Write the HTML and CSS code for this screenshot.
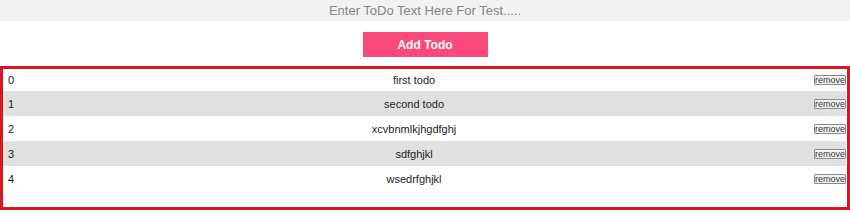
FILE: index.html
```html
<!DOCTYPE html>
<html lang="en">
<head>
  <meta charset="UTF-8" />
  <title>Todo List</title>
  <meta name="viewport" content="width=device-width, initial-scale=1.0"/>
  <link rel="stylesheet" href="styles.css">
</head>
<body>
  <input id="todoInput" class="todo-input" type="text" placeholder="Enter ToDo Text Here For Test....."/>
  <div class="add-wrap">
    <button class="add-button">Add Todo</button>
  </div>
  <ul class="todo-list" id="todoList">
    <li class="todo-row"><span class="todo-index">0</span><span class="todo-text">first todo</span><button class="remove-button">remove</button></li>
    <li class="todo-row"><span class="todo-index">1</span><span class="todo-text">second todo</span><button class="remove-button">remove</button></li>
    <li class="todo-row"><span class="todo-index">2</span><span class="todo-text">xcvbnmlkjhgdfghj</span><button class="remove-button">remove</button></li>
    <li class="todo-row"><span class="todo-index">3</span><span class="todo-text">sdfghjkl</span><button class="remove-button">remove</button></li>
    <li class="todo-row"><span class="todo-index">4</span><span class="todo-text">wsedrfghjkl</span><button class="remove-button">remove</button></li>
  </ul>
</body>
</html>
```

FILE: styles.css
```css
body { margin: 0; font-family: "Liberation Sans", Arial, sans-serif; background: white; color: #222; }
.todo-input {
  display: block; box-sizing: border-box; width: 100%; height: 21px; margin: 0;
  border: none; background: #f2f2f2; text-align: center; font-family: "Liberation Sans", Arial, sans-serif;
  font-size: 13px; color: #555; padding: 0;
}
.todo-input::placeholder { color: #858585; }
.add-wrap { text-align: center; padding: 11px 0 9px; }
.add-button {
  width: 125px; height: 25px; border: none; background: #fa4a7c; color: white;
  font-family: "Liberation Sans", Arial, sans-serif; font-weight: bold; font-size: 12px; cursor: pointer; margin: 0;
}
.todo-list {
  list-style: none; margin: 0; padding: 0 1px 16px 5px;
  border: 3px solid #d3181f; font-size: 11px;
}
.todo-row { display: flex; justify-content: space-between; align-items: center; height: 25px; }
.todo-row:first-child { height: 22px; }
.todo-row:nth-child(even) { background: #e0e0e0; margin-left: -5px; padding-left: 5px; }
.remove-button {
  font-family: "Liberation Sans", Arial, sans-serif; font-size: 9px; padding: 0; margin: 0;
  height: 10px; line-height: 8px; border: 1px solid #8a8a8a; background: #f4f4f4; color: #333; border-radius: 1px;
}
```
